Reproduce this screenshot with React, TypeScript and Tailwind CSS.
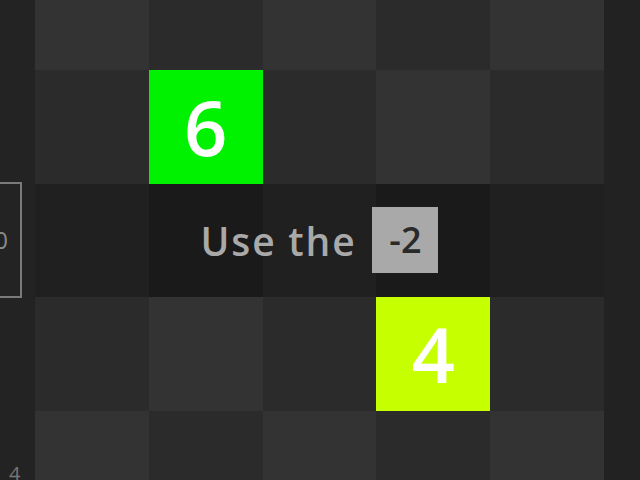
import React from "react";

const LIGHT = "bg-[#333333]";
const DARK = "bg-[#2b2b2b]";

type Cell = { bg: string; label?: string };

const rowsTop: Cell[][] = [
  [{ bg: LIGHT }, { bg: DARK }, { bg: LIGHT }, { bg: DARK }, { bg: LIGHT }],
  [{ bg: DARK }, { bg: "bg-[#00f200]", label: "6" }, { bg: DARK }, { bg: LIGHT }, { bg: DARK }],
];

const rowsBottom: Cell[][] = [
  [{ bg: DARK }, { bg: LIGHT }, { bg: DARK }, { bg: "bg-[#c6ff00]", label: "4" }, { bg: DARK }],
  [{ bg: LIGHT }, { bg: DARK }, { bg: LIGHT }, { bg: DARK }, { bg: LIGHT }],
];

const hintRow = ["bg-[#202020]", "bg-[#1a1a1a]", "bg-[#202020]", "bg-[#1a1a1a]", "bg-[#202020]"];

function Tile({ cell }: { cell: Cell }) {
  return (
    <div className={`h-[113.5px] ${cell.bg} flex items-center justify-center`}>
      {cell.label && (
        <span className="text-white text-[76px] font-semibold leading-none">{cell.label}</span>
      )}
    </div>
  );
}

export default function App() {
  return (
    <div
      className="w-[640px] h-[480px] overflow-hidden bg-[#222222] flex"
      style={{ fontFamily: '"Open Sans", "Noto Sans", sans-serif' }}
    >
      {/* side rail */}
      <div className="w-[35px] shrink-0 bg-[#232323] flex flex-col">
        <div className="h-[182px] shrink-0" />
        <div className="shrink-0 ml-[-22px] w-[44px] h-[116px] border-2 border-[#7a7a7a] flex items-center justify-end pr-[12px]">
          <span className="text-[#8a8a8a] text-[24px] leading-none">0</span>
        </div>
        <div className="h-[166px] shrink-0" />
        <span className="shrink-0 ml-[9px] text-[#777] text-[20px] leading-none">4</span>
      </div>

      {/* board */}
      <div className="w-[569px] shrink-0 mt-[-43.5px] flex flex-col">
        {rowsTop.map((row, i) => (
          <div key={`t${i}`} className="grid grid-cols-5">
            {row.map((c, j) => (
              <Tile key={j} cell={c} />
            ))}
          </div>
        ))}
        <div className="relative">
          <div className="grid grid-cols-5">
            {hintRow.map((bg, j) => (
              <div key={j} className={`h-[113.5px] ${bg}`} />
            ))}
          </div>
          <div className="absolute inset-0 flex items-center justify-center gap-[16px]">
            <span className="text-[#a9a9a9] text-[39px] font-semibold leading-none tracking-[1.8px]">
              Use the
            </span>
            <span className="w-[66px] h-[66px] bg-[#a9a9a9] flex items-center justify-center text-[#2a2a2a] text-[36px] font-semibold leading-none">
              -2
            </span>
          </div>
        </div>
        {rowsBottom.map((row, i) => (
          <div key={`b${i}`} className="grid grid-cols-5">
            {row.map((c, j) => (
              <Tile key={j} cell={c} />
            ))}
          </div>
        ))}
      </div>

      {/* right rail */}
      <div className="flex-1 bg-[#222222]" />
    </div>
  );
}
